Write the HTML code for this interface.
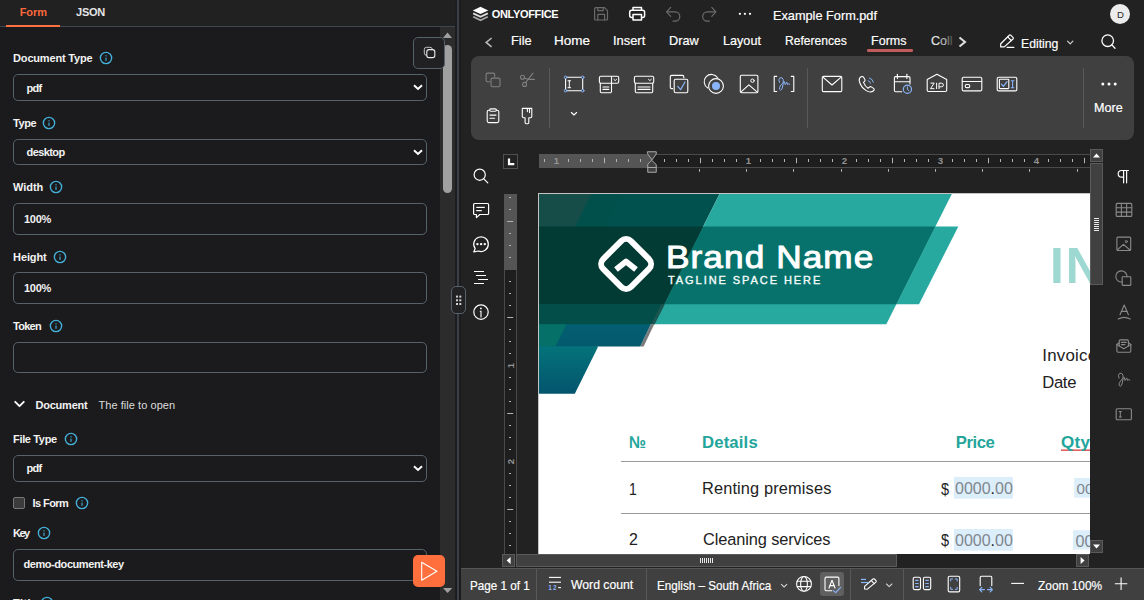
<!DOCTYPE html>
<html><head><meta charset="utf-8"><title>ONLYOFFICE Docs Playground</title>
<style>
html,body{margin:0;padding:0;}
body{width:1144px;height:600px;overflow:hidden;position:relative;background:#222222;font-family:"Liberation Sans",sans-serif;}
.a{position:absolute;box-sizing:border-box;}
.t{position:absolute;white-space:pre;line-height:20px;font-family:"Liberation Sans",sans-serif;}
.t i{font-style:normal;color:#222;}
svg{position:absolute;overflow:visible;}
.inp{position:absolute;box-sizing:border-box;left:13px;width:414px;border:1px solid #55616b;border-radius:5px;background:#1b1b1d;}
.info{position:absolute;width:14px;height:14px;}
.sep{position:absolute;width:1px;background:#595959;}
</style></head>
<body>
<!-- ================= LEFT PANEL ================= -->
<div class="a" id="left" style="left:0;top:0;width:457px;height:600px;background:#1b1b1d;"></div>
<div class="a" style="left:0;top:0;width:457px;height:27px;background:#212122;border-bottom:1px solid #3e4750;"></div>
<div class="a" style="left:6px;top:25px;width:54px;height:2px;background:#fd7040;"></div>
<!-- scrollbar -->
<div class="a" style="left:440px;top:27px;width:15px;height:573px;background:#2c2c2c;"></div>
<div class="a" style="left:443px;top:45px;width:9px;height:148px;background:#a0a0a0;border-radius:5px;"></div>
<svg style="left:440px;top:27px" width="15" height="573"><path d="M3 11 L7.5 5.5 L12 11 Z" fill="#a0a0a0"/><path d="M3 561 L12.2 561 L7.6 566 Z" fill="#a0a0a0"/></svg>
<!-- inputs -->
<div class="inp" style="top:74px;height:27px;"></div>
<div class="inp" style="top:139px;height:26px;"></div>
<div class="inp" style="top:203px;height:32px;"></div>
<div class="inp" style="top:272px;height:32px;"></div>
<div class="inp" style="top:342px;height:31px;"></div>
<div class="inp" style="top:455px;height:27px;"></div>
<div class="inp" style="top:549px;height:32px;"></div>
<!-- select chevrons -->
<svg style="left:413px;top:83.7px" width="10" height="8"><path d="M1 1.2 L5 5 L9 1.2" fill="none" stroke="#fff" stroke-width="1.9" stroke-linecap="butt" stroke-linejoin="miter"/></svg>
<svg style="left:413px;top:148.7px" width="10" height="8"><path d="M1 1.2 L5 5 L9 1.2" fill="none" stroke="#fff" stroke-width="1.9" stroke-linecap="butt" stroke-linejoin="miter"/></svg>
<svg style="left:413px;top:464.7px" width="10" height="8"><path d="M1 1.2 L5 5 L9 1.2" fill="none" stroke="#fff" stroke-width="1.9" stroke-linecap="butt" stroke-linejoin="miter"/></svg>
<!-- section chevron -->
<svg style="left:14px;top:400px" width="11" height="9"><path d="M1.2 1.8 L5.5 6.2 L9.8 1.8" fill="none" stroke="#fff" stroke-width="1.8" stroke-linecap="round" stroke-linejoin="round"/></svg>
<!-- checkbox -->
<div class="a" style="left:13px;top:497px;width:12px;height:12px;background:#3b3b3b;border:1px solid #767676;border-radius:2px;"></div>
<!-- info icons -->
<svg width="0" height="0" style="position:absolute"><defs>
<g id="info"><circle cx="7" cy="7" r="5.65" fill="none" stroke="#45b1da" stroke-width="1.35"/><rect x="6.45" y="6.6" width="1.1" height="3.3" fill="#45b1da"/><rect x="6.45" y="4.2" width="1.1" height="1.2" fill="#45b1da"/></g>
</defs></svg>
<svg class="info" style="left:98.5px;top:51.4px"><use href="#info"/></svg>
<svg class="info" style="left:42.4px;top:116.3px"><use href="#info"/></svg>
<svg class="info" style="left:49.3px;top:180.3px"><use href="#info"/></svg>
<svg class="info" style="left:53.0px;top:249.5px"><use href="#info"/></svg>
<svg class="info" style="left:48.5px;top:319.0px"><use href="#info"/></svg>
<svg class="info" style="left:63.5px;top:432.3px"><use href="#info"/></svg>
<svg class="info" style="left:75.4px;top:495.8px"><use href="#info"/></svg>
<svg class="info" style="left:37.0px;top:526.0px"><use href="#info"/></svg>
<svg class="info" style="left:39.8px;top:595.6px"><use href="#info"/></svg>
<!-- copy button -->
<div class="a" style="left:413px;top:37px;width:32px;height:32px;background:#212123;border:1px solid #55616b;border-radius:5px;"></div>
<svg style="left:423px;top:46px" width="13" height="13"><rect x="1.3" y="1.3" width="8" height="8" rx="2.2" fill="none" stroke="#c4c4c4" stroke-width="1"/><rect x="3.8" y="3.6" width="8" height="8" rx="2.2" fill="#212123" stroke="#ececec" stroke-width="1.1"/></svg>
<!-- run button -->
<div class="a" style="left:413px;top:555px;width:32px;height:32px;background:#ff6f3d;border-radius:5px;"></div>
<svg style="left:413px;top:555px" width="32" height="32"><path d="M8.7 7.2 L23.9 16.2 L8.7 25.2 Z" fill="none" stroke="#fff" stroke-width="1.1" stroke-linejoin="round"/></svg>
<!-- divider + handle -->
<div class="a" style="left:455px;top:0;width:2px;height:600px;background:#1d1d1f;"></div>
<div class="a" style="left:457px;top:0;width:2px;height:600px;background:#3a4047;"></div>
<div class="a" style="left:459px;top:0;width:2px;height:600px;background:#1c1c1d;"></div>
<!-- ================= RIGHT: DOCUMENT AREA ================= -->
<div class="a" style="left:538px;top:193px;width:570px;height:380px;background:#fff;border:1px solid #c4c4c4;"></div>
<svg style="left:0;top:0" width="1144" height="600" viewBox="0 0 1144 600">
<defs>
<linearGradient id="g4" x1="0" y1="0" x2="0" y2="1"><stop offset="0" stop-color="#04737a"/><stop offset="1" stop-color="#03556d"/></linearGradient>
<linearGradient id="g3" x1="0" y1="0" x2="0" y2="1"><stop offset="0" stop-color="#035f73"/><stop offset="1" stop-color="#03586c"/></linearGradient>
</defs>
<!-- seam underlays -->
<rect x="539" y="345" width="58" height="3" fill="#04727a"/>
<rect x="539" y="323" width="111" height="3" fill="#034e48"/>
<!-- base dark teal -->
<polygon points="539,194 719.5,194 654.2,324.2 539,324.2" fill="#01524e"/>
<!-- top-left lighter slate -->
<polygon points="539,194 591.5,194 575.3,226.5 539,226.5" fill="#164d48"/>
<polygon points="591.5,194 622,194 605.8,226.5 575.3,226.5" fill="#02504c"/>
<!-- light teal parallelogram -->
<polygon points="719.5,194 951.8,194 886.3,324.2 654.2,324.2" fill="#28a99f"/>
<!-- band extension -->
<polygon points="935.2,226.5 958.3,226.5 919.0,304.2 896.3,304.2" fill="#28a9a0"/>
<!-- medium band -->
<polygon points="703.2,226.5 935.2,226.5 896.3,304.2 664.3,304.2" fill="#06726b"/>
<!-- dark band -->
<polygon points="539,226.5 703.2,226.5 664.3,304.2 539,304.2" fill="#023a34"/>
<!-- row below band -->
<polygon points="539,304.2 664.3,304.2 654.2,324.2 539,324.2" fill="#034e48"/>
<polygon points="661.2,304.2 664.8,304.2 654.7,324.2 651.1,324.2" fill="#1c5650"/>
<!-- row 3 -->
<polygon points="650.8,324.2 654.2,324.2 643.6,346.4 640.2,346.4" fill="#7a7a7a"/>
<polygon points="539,324.2 650.8,324.2 640.2,346.4 539,346.4" fill="url(#g3)"/>
<polygon points="539,324.2 566.5,324.2 555.5,346.4 539,346.4" fill="#047068"/>
<!-- row 4 -->
<polygon points="539,346.4 598.2,346.4 574.8,393.7 539,393.7" fill="url(#g4)"/>
<!-- logo -->
<rect x="606.4" y="244.3" width="39.4" height="39.4" rx="7" fill="none" stroke="#fff" stroke-width="6" transform="rotate(45 626.1 264)"/>
<path d="M616 269.6 L626 261.4 L636 269.6" fill="none" stroke="#fff" stroke-width="5.8" stroke-linejoin="round"/>
<!-- table lines -->
<rect x="621" y="461" width="480" height="1" fill="#9a9a9a"/>
<rect x="621" y="513" width="480" height="1" fill="#9a9a9a"/>
<!-- fields -->
<rect x="953.9" y="476.9" width="59" height="21.8" fill="#ddeefb"/>
<rect x="953.9" y="529" width="59" height="21.7" fill="#ddeefb"/>
<rect x="1074.2" y="477.9" width="30" height="19.8" fill="#ddeefb"/>
<rect x="1073" y="530.2" width="30" height="19.4" fill="#ddeefb"/>
<!-- spell underline -->
<rect x="1061" y="449.5" width="40" height="1.3" fill="#e03a3a"/>
</svg>

<span class="t" style="left:665.90px;top:247.31px;font-size:32px;color:#fff;letter-spacing:0.977px;transform:scaleX(1.1);transform-origin:0 0;-webkit-text-stroke:0.95px #fff;">Brand Name</span>
<span class="t" style="left:668.10px;top:271.07px;font-size:10.2px;color:#f4fbfa;letter-spacing:1.789px;transform:scaleX(1.08);transform-origin:0 0;-webkit-text-stroke:0.35px #f4fbfa;">TAGLINE SPACE HERE</span>
<span class="t" style="left:1050.00px;top:256.01px;font-size:49.6px;color:#9dd8d2;font-weight:700;letter-spacing:2px;">IN</span>
<span class="t" style="left:1042.20px;top:346.14px;font-size:16.9px;color:#222;letter-spacing:0.25px;">Invoice</span>
<span class="t" style="left:1042.20px;top:373.21px;font-size:16.7px;color:#222;letter-spacing:-0.323px;">Date</span>
<span class="t" style="left:628.60px;top:433.11px;font-size:17px;color:#23a59b;font-weight:700;transform:scaleX(0.9);transform-origin:0 0;">№</span>
<span class="t" style="left:702.00px;top:433.21px;font-size:16.7px;color:#23a59b;font-weight:700;letter-spacing:0.160px;">Details</span>
<span class="t" style="left:955.70px;top:433.21px;font-size:16.7px;color:#23a59b;font-weight:700;letter-spacing:-0.410px;">Price</span>
<span class="t" style="left:1061.30px;top:433.21px;font-size:16.7px;color:#23a59b;font-weight:700;transform:scaleX(1.02);transform-origin:0 0;letter-spacing:0.3px;">Qty</span>
<span class="t" style="left:629.45px;top:479.28px;font-size:16.5px;color:#222;transform:scaleX(0.85);transform-origin:0 0;">1</span>
<span class="t" style="left:702.02px;top:479.21px;font-size:16.7px;color:#222;letter-spacing:0.140px;transform:scaleX(0.98);transform-origin:0 0;">Renting premises</span>
<span class="t" style="left:940.80px;top:478.98px;font-size:16.5px;color:#222;transform:scaleX(0.88);transform-origin:0 0;">$</span>
<span class="t" style="left:954.70px;top:478.48px;font-size:16.5px;color:#7f868e;transform:scaleX(0.97);transform-origin:0 0;">0000<i>.</i>00</span>
<span class="t" style="left:1076.50px;top:478.63px;font-size:15.2px;color:#7f868e;">00</span>
<span class="t" style="left:629.40px;top:528.88px;font-size:16.5px;color:#222;transform:scaleX(0.97);transform-origin:0 0;">2</span>
<span class="t" style="left:703.00px;top:529.51px;font-size:16.7px;color:#222;letter-spacing:-0.104px;transform:scaleX(0.98);transform-origin:0 0;">Cleaning services</span>
<span class="t" style="left:940.80px;top:529.88px;font-size:16.5px;color:#222;transform:scaleX(0.88);transform-origin:0 0;">$</span>
<span class="t" style="left:954.70px;top:530.08px;font-size:16.5px;color:#7f868e;transform:scaleX(0.97);transform-origin:0 0;">0000<i>.</i>00</span>
<span class="t" style="left:1075.40px;top:531.39px;font-size:16.2px;color:#7f868e;">00</span>
<!-- overlays clipping page -->
<div class="a" style="left:1090px;top:141px;width:54px;height:427px;background:#222222;"></div>
<div class="a" style="left:461px;top:554px;width:683px;height:14px;background:#222222;"></div>
<div class="a" style="left:461px;top:141px;width:77px;height:413px;background:#222222;"></div>
<!-- status bar -->
<div class="a" style="left:461px;top:568px;width:683px;height:32px;background:#404040;border-top:1px solid #565656;"></div>
<div class="sep" style="left:536px;top:569px;height:31px;background:#585858;"></div>
<div class="sep" style="left:646px;top:569px;height:31px;background:#585858;"></div>
<div class="sep" style="left:850px;top:569px;height:31px;background:#585858;"></div>
<div class="sep" style="left:903px;top:569px;height:31px;background:#585858;"></div>
<div class="a" style="left:820px;top:572px;width:24px;height:24px;background:#606060;border-radius:3px;"></div>
<!-- toolbar panel -->
<div class="a" style="left:471px;top:56px;width:663px;height:84px;background:#404040;border-radius:8px;"></div>
<div class="sep" style="left:549px;top:68px;height:60px;"></div>
<div class="sep" style="left:807px;top:68px;height:60px;"></div>
<div class="sep" style="left:1083px;top:68px;height:60px;"></div>
<!-- forms tab underline -->
<div class="a" style="left:867.4px;top:49.2px;width:45.2px;height:2.4px;background:#bf5d5d;border-radius:1.2px;"></div>
<!-- avatar -->
<div class="a" style="left:1110px;top:4px;width:20px;height:20px;border-radius:10px;background:#ececec;"></div>
<!-- horizontal ruler -->
<div class="a" style="left:539px;top:154px;width:551px;height:14px;background:#1e1e1e;border-top:1px solid #4a4a4a;border-bottom:1px solid #4a4a4a;"></div>
<div class="a" style="left:539px;top:154px;width:113px;height:14px;background:#555555;"></div>
<!-- ruler corner -->
<div class="a" style="left:503px;top:154px;width:15px;height:15px;background:#222;border:1px solid #505050;"></div>
<!-- vertical ruler -->
<div class="a" style="left:504px;top:194px;width:13px;height:360px;background:#1e1e1e;border-left:1px solid #4a4a4a;border-right:1px solid #4a4a4a;"></div>
<div class="a" style="left:504px;top:194px;width:13px;height:76px;background:#555555;"></div>
<!-- v scrollbar -->
<div class="a" style="left:1090px;top:149px;width:13px;height:13px;background:#404040;border:1px solid #5a5a5a;"></div>
<div class="a" style="left:1090px;top:163px;width:13px;height:122px;background:#404040;border:1px solid #5a5a5a;"></div>
<div class="a" style="left:1090px;top:540px;width:13px;height:13px;background:#404040;border:1px solid #5a5a5a;"></div>
<!-- h scrollbar -->
<div class="a" style="left:502px;top:554px;width:13px;height:13px;background:#404040;border:1px solid #5a5a5a;"></div>
<div class="a" style="left:516px;top:554px;width:381px;height:13px;background:#404040;border:1px solid #5a5a5a;"></div>
<div class="a" style="left:1076px;top:554px;width:13px;height:13px;background:#404040;border:1px solid #5a5a5a;"></div>
<svg style="left:0;top:0" width="1144" height="600" viewBox="0 0 1144 600" fill="none" stroke-linecap="round" stroke-linejoin="round">
<!-- ===== header icons ===== -->
<g>
<polygon points="472.8,10.4 480.5,6.8 488.2,10.4 480.5,13.9" fill="#fff"/>
<path d="M473.2 13.3 L480.5 16.75 L487.8 13.3" stroke="#dcdcdc" stroke-width="1.9" stroke-linecap="butt" stroke-linejoin="miter"/>
<path d="M473.2 16.8 L480.5 20.25 L487.8 16.8" stroke="#a6a6a6" stroke-width="1.8" stroke-linecap="butt" stroke-linejoin="miter"/>
</g>
<g stroke="#6b6b6b" stroke-width="1.2">
<path d="M596 7.6 H604.5 L607.5 10.6 V19 Q607.5 20 606.5 20 H595.6 Q594.6 20 594.6 19 V9 Q594.6 7.6 596 7.6 Z"/>
<path d="M597.8 7.8 V10.7 H603.2 V7.8"/>
<path d="M597.8 20 V14.4 H604.6 V20"/>
<!-- undo -->
<path d="M670.7 7.4 L666.6 11.9 L670.7 16.4"/>
<path d="M667 11.9 H675.2 A4.6 4.6 0 0 1 675.2 21.1 H673"/>
<!-- redo -->
<path d="M711.8 7.4 L715.9 11.9 L711.8 16.4"/>
<path d="M715.5 11.9 H707.3 A4.6 4.6 0 0 0 707.3 21.1 H709.5"/>
</g>
<g stroke="#fff" stroke-width="1.5">
<rect x="629.7" y="10.2" width="14.9" height="7.4" rx="2"/>
<path d="M633 10 V7.4 H641.5 V10"/>
<rect x="633" y="14.4" width="8.5" height="5.6" fill="#222"/>
</g>
<g fill="#fff"><circle cx="739.9" cy="13.8" r="1.15"/><circle cx="744.9" cy="13.8" r="1.15"/><circle cx="750" cy="13.8" r="1.15"/></g>
<!-- ===== tab row icons ===== -->
<path d="M491.6 38 L486.2 42.4 L491.6 46.8" stroke="#b8b8b8" stroke-width="1.6" stroke-linecap="butt" stroke-linejoin="miter"/>
<path d="M959.5 37.5 L965 42 L959.5 46.5" stroke="#e2e2e2" stroke-width="2" stroke-linecap="butt" stroke-linejoin="miter"/>
<!-- pencil -->
<g stroke="#fff" stroke-width="1.2">
<path d="M1000.7 46.9 V43.7 L1009.3 35.3 Q1010.1 34.6 1010.9 35.3 L1013 37.4 Q1013.7 38.2 1013 39 L1004.3 46.9 Z"/>
<path d="M1007.7 36.9 L1011.3 40.5"/>
<path d="M1007 47.3 H1013.9"/>
</g>
<path d="M1067.5 41.2 L1070.2 43.9 L1072.9 41.2" stroke="#d0d0d0" stroke-width="1.2"/>
<g stroke="#fff" stroke-width="1.3"><circle cx="1107.7" cy="40.7" r="5.8"/><path d="M1111.9 44.9 L1115 48.2"/></g>
<!-- ===== toolbar icons ===== -->
<g stroke="#7f7f7f" stroke-width="1.1">
<path d="M489.6 81.7 H487.6 Q486.1 81.7 486.1 80.2 V74.6 Q486.1 73.1 487.6 73.1 H493.2 Q494.7 73.1 494.7 74.6 V76.6"/>
<rect x="491" y="78.1" width="9" height="8.7" rx="1.5"/>
<circle cx="522.5" cy="77.3" r="2"/><circle cx="524.6" cy="84.4" r="2"/>
<path d="M533 73.1 L525.6 82.6"/><path d="M524.4 78 L528.6 79.4 H534.4"/>
</g>
<g stroke="#fff" stroke-width="1.1">
<!-- paste -->
<rect x="487.2" y="110.2" width="11.6" height="12.4" rx="1.6"/>
<rect x="489.6" y="108.9" width="6.8" height="2.4" rx="1.2" fill="#404040"/>
<path d="M490 115.1 H496"/><path d="M490 118.2 H494.5"/>
<!-- painter -->
<path d="M522.3 108.4 H531.8 V116.6 Q531.8 117.8 530.6 117.8 H528.8 V122.6 Q528.8 123.7 527.7 123.7 H526.2 Q525.1 123.7 525.1 122.6 V117.8 H523.5 Q522.3 117.8 522.3 116.6 Z"/>
<path d="M527.4 108.6 V111.6"/><path d="M529.5 108.6 V112.6"/>
<!-- text field -->
<rect x="565.6" y="77.3" width="17.1" height="13.4"/>
<path d="M568 80.8 H570.6 M569.3 80.8 V87.7 M568 87.7 H570.6" stroke-width="1"/>
<!-- combo -->
<rect x="599.4" y="76.3" width="19.3" height="7" rx="1.5"/>
<path d="M611.5 76.5 V83.3"/>
<path d="M600.3 83.3 V91.6 Q600.3 92.8 601.5 92.8 H610.3 Q611.5 92.8 611.5 91.6 V83.3"/>
<path d="M603 87 H608.8"/><path d="M603 89.4 H608.8"/>
<path d="M613.9 79.4 L615.2 80.6 L616.5 79.4" stroke-width="1"/>
<!-- dropdown -->
<rect x="634.4" y="76.3" width="19.3" height="7" rx="1.5"/>
<path d="M635.3 83.3 V91.6 Q635.3 92.8 636.5 92.8 H651.5 Q652.7 92.8 652.7 91.6 V83.3"/>
<path d="M638 87 H650"/><path d="M638 89.4 H650"/>
<path d="M648.5 79.3 L649.9 80.6 L651.3 79.3" stroke-width="1"/>
<!-- checkbox -->
<path d="M672.8 88.6 H671.6 Q670.3 88.6 670.3 87.3 V76.7 Q670.3 75.4 671.6 75.4 H682.5 Q683.8 75.4 683.8 76.7 V77.8"/>
<rect x="674.2" y="79.2" width="13.6" height="13.6" rx="1.5"/>
<!-- radio -->
<path d="M707.8 88 A7.3 7.3 0 1 1 717.6 77.7"/>
<circle cx="716" cy="86" r="7.4"/>
<!-- image -->
<rect x="740.3" y="75.3" width="17.6" height="17.5" rx="1.2"/>
<path d="M741.3 91.6 L748.9 84.8 L757 91.8"/>
<circle cx="752.5" cy="80.7" r="1.7" stroke-width="1"/>
<!-- signature brackets -->
<path d="M776.7 76.4 H774.2 V91.5 H776.7"/><path d="M791.3 76.4 H793.8 V91.5 H791.3"/>
<!-- email -->
<rect x="822.3" y="76.4" width="19.5" height="15.2" rx="1.2"/>
<path d="M823.2 77.4 L832 85 L840.9 77.4"/>
<!-- phone -->
<path d="M861.6 76.6 Q859 77.6 859.2 80.6 Q860.4 86.8 866.2 90.6 Q870.4 93.2 873.6 90.8 Q874.8 89.6 873.9 88.6 L871.4 86.9 Q870.3 86.3 869.3 87.2 L868 88.2 Q865.1 86.4 863.5 82.4 L864.6 81.3 Q865.4 80.4 864.8 79.2 L863.4 77 Q862.6 76.2 861.6 76.6 Z"/>
<!-- calendar -->
<path d="M901.8 91.7 H895.6 Q894.4 91.7 894.4 90.5 V77.8 Q894.4 76.6 895.6 76.6 H908.8 Q910 76.6 910 77.8 V84"/>
<path d="M894.6 81.7 H909.8"/><path d="M897.4 74.3 V78.4"/><path d="M906.9 74.3 V78.4"/>
<!-- zip -->
<path d="M927.2 79.6 L936.9 74.3 L946.7 79.6 V90.3 Q946.7 91.5 945.5 91.5 H928.4 Q927.2 91.5 927.2 90.3 Z"/>
<!-- card -->
<rect x="962.2" y="77.2" width="19.6" height="13.7" rx="1.5"/>
<path d="M962.4 81.5 H981.6"/>
<rect x="965.3" y="84.5" width="4.4" height="3.1" rx="1.2"/>
<!-- complex -->
<rect x="997.2" y="77.2" width="19.6" height="13.7" rx="1.5"/>
<rect x="999.4" y="79.2" width="9.4" height="9.4" rx="0.6"/>
<!-- chevron -->
<path d="M571.4 112.5 L574 115 L576.6 112.5"/>
</g>
<path d="M930.5 83.1 H934.2 L930.5 88.7 H934.4 M936.6 82.8 V89 M939 89 V83.2 H941.3 Q943.4 83.2 943.4 85 Q943.4 86.8 941.3 86.8 H939" stroke="#fff" stroke-width="1" stroke-linecap="butt" stroke-linejoin="miter"/>
<g stroke="#8ab4f8" stroke-width="1.2">
<g fill="#404040" stroke-width="1"><circle cx="565.6" cy="77.3" r="1.3"/><circle cx="582.7" cy="77.3" r="1.3"/><circle cx="565.6" cy="90.7" r="1.3"/><circle cx="582.7" cy="90.7" r="1.3"/></g>
<path d="M677.7 86.4 L680.6 89.6 L685 82"/>
<circle cx="716" cy="86" r="4" fill="#8ab4f8" stroke="none"/>
<!-- signature script -->
<path d="M779.4 82.4 Q778 79 780 77.8 Q782.6 77 783.2 79.6 Q783.6 83 782.6 87 Q781.8 90.2 780.6 90.2 Q779 89.6 779.6 87.4 Q780.6 84.4 784.4 81.6 L785.2 84.6 L786.8 82.2 L787.6 84.6 Q788.6 83 789.8 84.2" stroke-width="1"/>
<!-- phone waves -->
<path d="M868.2 80.8 Q870 81.2 870.6 83.2" stroke-width="1"/>
<path d="M869.4 78 Q872.6 78.8 873.4 82.2" stroke-width="1"/>
<!-- clock -->
<circle cx="907.4" cy="89.3" r="4.1" fill="#404040"/>
<path d="M907.4 86.9 V89.5 L908.9 90.6" stroke-width="1"/>
<!-- complex check + I -->
<path d="M1001.4 84.2 L1003.4 86.4 L1007 81.6"/>
<path d="M1011.2 80.7 H1014 M1012.6 80.7 V87.7 M1011.2 87.7 H1014" stroke-width="1.1"/>
</g>
<g fill="#fff"><circle cx="1102.8" cy="84" r="1.5"/><circle cx="1109" cy="84" r="1.5"/><circle cx="1115.2" cy="84" r="1.5"/></g>

<!-- ===== left sidebar ===== -->
<g stroke="#fff" stroke-width="1.2">
<circle cx="479.7" cy="174.7" r="5.6"/><path d="M483.8 178.8 L487.8 182.8"/>
<path d="M474.6 203.5 H487.6 Q488.6 203.5 488.6 204.5 V213.5 Q488.6 214.5 487.6 214.5 H479.8 L476.4 217.6 V214.5 H474.6 Q473.6 214.5 473.6 213.5 V204.5 Q473.6 203.5 474.6 203.5 Z"/>
<path d="M476.2 207.4 H484.8" stroke-linecap="butt"/><path d="M476.2 210.6 H481.8" stroke-linecap="butt"/>
<path d="M475.2 248.6 A7.3 7.3 0 1 1 478.4 251 L473.8 251.8 Z"/>
<path d="M474 271.5 H484 M476 275.5 H486 M478 279.5 H488 M474 283.5 H484" stroke-width="1.1" stroke-linecap="butt"/>
<circle cx="481" cy="312.1" r="7.2"/><path d="M479.8 311.2 H481 V317.4" stroke-width="1.1" stroke-linecap="butt" stroke-linejoin="miter"/>
</g>
<g fill="#fff"><circle cx="477.4" cy="244.1" r="1.2"/><circle cx="481.1" cy="244.1" r="1.2"/><circle cx="484.8" cy="244.1" r="1.2"/><circle cx="480.9" cy="308.4" r="0.9"/></g>
<!-- ===== right sidebar ===== -->
<g stroke="#fff" stroke-width="1.2">
<path d="M1128.4 170.5 H1121.6 Q1118.2 170.5 1118.2 173.8 Q1118.2 177.2 1121.6 177.2 H1123.6"/>
<path d="M1123.6 170.5 V182.8"/><path d="M1126.6 170.5 V182.8"/>
</g>
<g stroke="#8a8a8a" stroke-width="1.1">
<rect x="1116.2" y="203.4" width="15.6" height="13" rx="1"/>
<path d="M1116.4 207.8 H1131.6"/><path d="M1116.4 212.1 H1131.6"/><path d="M1121.4 203.6 V216.2"/><path d="M1126.6 203.6 V216.2"/>
<rect x="1116.9" y="237.1" width="13.8" height="13.4" rx="1"/>
<path d="M1117.6 249.6 L1123.4 244.4 L1130 250"/><circle cx="1126.3" cy="241.6" r="1.1" stroke-width="1"/>
<path d="M1122.2 282 A5.6 5.6 0 1 1 1127 276.6"/>
<rect x="1122.2" y="276.8" width="8.6" height="8.6" rx="0.6"/>
<path d="M1120 314.8 L1124.2 305 L1128.4 314.8"/><path d="M1121.4 311.4 H1127"/>
<path d="M1118.2 319 Q1124.2 315.8 1130.2 319"/>
<path d="M1116.9 344.4 V351 Q1116.9 352.2 1118.1 352.2 H1129.6 Q1130.8 352.2 1130.8 351 V344.4"/>
<path d="M1116.9 344.6 L1123.8 348.8 L1130.8 344.6"/>
<path d="M1116.9 344.4 L1119.2 342.8 M1130.8 344.4 L1128.4 342.8"/>
<path d="M1119.2 346 V340.9 Q1119.2 339.9 1120.2 339.9 H1127.4 Q1128.4 339.9 1128.4 340.9 V346"/>
<path d="M1121.4 342.4 H1126.2"/><path d="M1121.4 344.6 H1125"/>
<path d="M779.4 82.4 Q778 79 780 77.8 Q782.6 77 783.2 79.6 Q783.6 83 782.6 87 Q781.8 90.2 780.6 90.2 Q779 89.6 779.6 87.4 Q780.6 84.4 784.4 81.6 L785.2 84.6 L786.8 82.2 L787.6 84.6 Q788.6 83 789.8 84.2" stroke-width="0.95" transform="translate(300.60 291.62) scale(1.05)"/>
<rect x="1116.2" y="408.7" width="15.2" height="11" rx="1"/>
<path d="M1119.2 411.6 H1121.4 M1120.3 411.6 V417 M1119.2 417 H1121.4" stroke-width="1"/>
</g>
<!-- ===== rulers ===== -->
<path d="M544.5 159.0 V162.0M568.5 159.0 V162.0M580.5 159.0 V162.0M592.5 159.0 V162.0M604.5 157.8 V163.2M616.5 159.0 V162.0M628.5 159.0 V162.0M640.5 159.0 V162.0M664.5 159.0 V162.0M676.5 159.0 V162.0M688.5 159.0 V162.0M700.5 157.8 V163.2M712.5 159.0 V162.0M724.5 159.0 V162.0M736.5 159.0 V162.0M760.5 159.0 V162.0M772.5 159.0 V162.0M784.5 159.0 V162.0M796.5 157.8 V163.2M808.5 159.0 V162.0M820.5 159.0 V162.0M832.5 159.0 V162.0M856.5 159.0 V162.0M868.5 159.0 V162.0M880.5 159.0 V162.0M892.5 157.8 V163.2M904.5 159.0 V162.0M916.5 159.0 V162.0M928.5 159.0 V162.0M952.5 159.0 V162.0M964.5 159.0 V162.0M976.5 159.0 V162.0M988.5 157.8 V163.2M1000.5 159.0 V162.0M1012.5 159.0 V162.0M1024.5 159.0 V162.0M1048.5 159.0 V162.0M1060.5 159.0 V162.0M1072.5 159.0 V162.0M1084.5 157.8 V163.2" stroke="#b4b4b4" stroke-width="1" stroke-linecap="butt"/>
<text x="556.5" y="164.3" font-family="Liberation Sans, sans-serif" font-size="9.6" font-weight="700" fill="#949494" stroke="none" text-anchor="middle">1</text>
<text x="748.5" y="164.3" font-family="Liberation Sans, sans-serif" font-size="9.6" font-weight="700" fill="#949494" stroke="none" text-anchor="middle">1</text>
<text x="844.5" y="164.3" font-family="Liberation Sans, sans-serif" font-size="9.6" font-weight="700" fill="#949494" stroke="none" text-anchor="middle">2</text>
<text x="940.5" y="164.3" font-family="Liberation Sans, sans-serif" font-size="9.6" font-weight="700" fill="#949494" stroke="none" text-anchor="middle">3</text>
<text x="1036.5" y="164.3" font-family="Liberation Sans, sans-serif" font-size="9.6" font-weight="700" fill="#949494" stroke="none" text-anchor="middle">4</text>
<path d="M699.5 169 V171.8M746.5 169 V171.8M793.5 169 V171.8M841.5 169 V171.8M888.5 169 V171.8M935.5 169 V171.8M982.5 169 V171.8M1029.5 169 V171.8M1077.5 169 V171.8" stroke="#b0b0b0" stroke-width="1" stroke-linecap="butt"/>
<g stroke="#a8a8a8" stroke-width="1" fill="#404040" stroke-linejoin="miter">
<path d="M647.75 151.75 H656.25 V154 L652 159.9 L647.75 154 Z"/>
<path d="M652 160.5 L656.25 164.6 V172.25 H647.75 V164.6 Z"/><path d="M647.75 167.5 H656.25"/>
</g>
<path d="M509 158.6 V164.1 H514.3" stroke="#fff" stroke-width="2.2" stroke-linecap="butt" stroke-linejoin="miter"/>
<path d="M509.0 197.5 H511.0M509.0 209.5 H511.0M507.2 221.5 H513.2M509.0 233.5 H511.0M509.0 245.5 H511.0M509.0 257.5 H511.0M509.0 281.5 H511.0M509.0 293.5 H511.0M509.0 305.5 H511.0M507.2 317.5 H513.2M509.0 329.5 H511.0M509.0 341.5 H511.0M509.0 353.5 H511.0M509.0 377.5 H511.0M509.0 389.5 H511.0M509.0 401.5 H511.0M507.2 413.5 H513.2M509.0 425.5 H511.0M509.0 437.5 H511.0M509.0 449.5 H511.0M509.0 473.5 H511.0M509.0 485.5 H511.0M509.0 497.5 H511.0M507.2 509.5 H513.2M509.0 521.5 H511.0M509.0 533.5 H511.0M509.0 545.5 H511.0" stroke="#b4b4b4" stroke-width="1" stroke-linecap="butt"/>
<text x="0" y="0" transform="translate(513.5 365.5) rotate(-90)" font-family="Liberation Sans, sans-serif" font-size="9.6" font-weight="700" fill="#949494" stroke="none" text-anchor="middle">1</text>
<text x="0" y="0" transform="translate(513.5 461.5) rotate(-90)" font-family="Liberation Sans, sans-serif" font-size="9.6" font-weight="700" fill="#949494" stroke="none" text-anchor="middle">2</text>
<!-- ===== scrollbars ===== -->
<g fill="#fff" stroke="none">
<path d="M1093 157.6 L1096.5 153.6 L1100 157.6 Z"/>
<path d="M1093 544.6 L1100 544.6 L1096.5 548.6 Z"/>
<path d="M510.6 557 L506.6 560.5 L510.6 564 Z"/>
<path d="M1080.6 557 L1084.6 560.5 L1080.6 564 Z"/>
</g>
<path d="M1094 218.5 H1099M1094 220.5 H1099M1094 222.5 H1099M1094 224.5 H1099M1094 226.5 H1099M1094 228.5 H1099M1094 230.5 H1099M700.5 558 V563M702.5 558 V563M704.5 558 V563M706.5 558 V563M708.5 558 V563M710.5 558 V563M712.5 558 V563" stroke="#e8e8e8" stroke-width="1" stroke-linecap="butt"/>

<!-- ===== status bar icons ===== -->
<g stroke="#fff" stroke-width="1.1">
<path d="M549 577.4 H561" stroke-linecap="butt"/><path d="M549 582.2 H561" stroke-linecap="butt"/><path d="M558.2 587.6 H561" stroke-linecap="butt"/>
<path d="M781.4 584.4 L784.1 587 L786.8 584.4" stroke="#d0d0d0"/>
<circle cx="804" cy="583.9" r="7.4"/><ellipse cx="804" cy="583.9" rx="3.4" ry="7.4"/>
<path d="M797.2 581.2 H810.8"/><path d="M797.2 586.6 H810.8"/>
<path d="M831.6 590.7 H826.2 Q825 590.7 825 589.5 V578.3 Q825 577.1 826.2 577.1 H837.7 Q838.9 577.1 838.9 578.3 V585.6"/>
<path d="M829 588 L832 580.2 L835 588"/><path d="M830 585.6 H834"/>
<path d="M864.6 589 V586.4 L873 579 Q873.8 578.4 874.5 579 L876 580.6 Q876.6 581.4 875.9 582.2 L867.4 589.2 Z"/>
<path d="M871.4 580.6 L874.2 583.6"/>
<path d="M886.5 584 L889.2 586.7 L891.9 584" stroke="#d0d0d0"/>
<rect x="913.2" y="577.3" width="7.3" height="12.3" rx="1.5"/><rect x="923.4" y="577.3" width="7.3" height="12.3" rx="1.5"/>
<rect x="948.2" y="576.3" width="11.5" height="15.6" rx="1.5"/>
<path d="M980.2 585.6 V577.5 Q980.2 576.3 981.4 576.3 H990.6 Q991.8 576.3 991.8 577.5 V585.6"/>
<path d="M1011.2 583.4 H1024" stroke-linecap="butt"/>
<path d="M1114.9 583.8 H1127.3 M1121.1 577.6 V590" stroke-linecap="butt"/>
</g>
<text x="548.2" y="589.9" font-family="Liberation Sans, sans-serif" font-size="6.4" font-weight="700" fill="#8ab4f8" stroke="none" textLength="8.4" lengthAdjust="spacing">12</text>
<g stroke="#8ab4f8" stroke-width="1.2">
<path d="M833.2 590.6 L835.7 592.6 L840.6 587.4"/>
<path d="M861 579.4 H866" stroke-linecap="butt"/><path d="M861 582.5 H868.6" stroke-linecap="butt"/>
<path d="M915.2 580.4 H918.6 M915.2 583.5 H918.6 M915.2 586.6 H918.6 M925.4 580.4 H928.8 M925.4 583.5 H928.8 M925.4 586.6 H928.8" stroke-linecap="butt" stroke-width="1.1"/>
<path d="M950.7 581.3 V578.9 H953 M954.9 578.9 H957.2 V581.3 M957.2 586.9 V589.3 H954.9 M953 589.3 H950.7 V586.9" stroke-width="1" stroke-linecap="butt" stroke-linejoin="miter"/>
<path d="M979.6 589.6 H984.4 M981.8 587.4 L979.6 589.6 L981.8 591.8"/>
<path d="M987.6 589.6 H992.4 M990.2 587.4 L992.4 589.6 L990.2 591.8"/>
</g>

</svg>


<div class="a" style="left:451px;top:286px;width:15px;height:28px;background:#222224;border:1px solid #55616b;border-radius:5px;"></div>
<svg style="left:451px;top:286px" width="15" height="28"><g fill="#d0d0d0"><rect x="5" y="9.6" width="2" height="2"/><rect x="8.3" y="9.6" width="2" height="2"/><rect x="5" y="13.3" width="2" height="2"/><rect x="8.3" y="13.3" width="2" height="2"/><rect x="5" y="17" width="2" height="2"/><rect x="8.3" y="17" width="2" height="2"/></g></svg>

<span class="t" style="left:19.70px;top:2.29px;font-size:11px;color:#f8683c;font-weight:700;letter-spacing:-0.073px;">Form</span>
<span class="t" style="left:76.00px;top:2.29px;font-size:11px;color:#e6e6e6;font-weight:700;letter-spacing:-0.237px;">JSON</span>
<span class="t" style="left:13.10px;top:48.49px;font-size:11px;color:#f2f2f2;font-weight:700;letter-spacing:-0.181px;">Document Type</span>
<span class="t" style="left:26.50px;top:78.09px;font-size:11px;color:#f2f2f2;font-weight:700;letter-spacing:-0.669px;">pdf</span>
<span class="t" style="left:13.10px;top:113.19px;font-size:11px;color:#f2f2f2;font-weight:700;letter-spacing:-0.447px;">Type</span>
<span class="t" style="left:26.50px;top:142.19px;font-size:11px;color:#f2f2f2;font-weight:700;letter-spacing:-0.576px;">desktop</span>
<span class="t" style="left:13.10px;top:177.19px;font-size:11px;color:#f2f2f2;font-weight:700;letter-spacing:-0.081px;">Width</span>
<span class="t" style="left:24.00px;top:209.19px;font-size:11px;color:#f2f2f2;font-weight:700;letter-spacing:-0.284px;">100%</span>
<span class="t" style="left:13.10px;top:246.69px;font-size:11px;color:#f2f2f2;font-weight:700;letter-spacing:-0.131px;">Height</span>
<span class="t" style="left:24.00px;top:278.19px;font-size:11px;color:#f2f2f2;font-weight:700;letter-spacing:-0.284px;">100%</span>
<span class="t" style="left:13.10px;top:316.19px;font-size:11px;color:#f2f2f2;font-weight:700;letter-spacing:-0.739px;">Token</span>
<span class="t" style="left:35.50px;top:395.19px;font-size:11px;color:#f2f2f2;font-weight:700;letter-spacing:-0.231px;">Document</span>
<span class="t" style="left:98.50px;top:395.19px;font-size:11px;color:#dcdcdc;letter-spacing:0.053px;">The file to open</span>
<span class="t" style="left:13.10px;top:429.19px;font-size:11px;color:#f2f2f2;font-weight:700;letter-spacing:-0.356px;">File Type</span>
<span class="t" style="left:26.50px;top:457.99px;font-size:11px;color:#f2f2f2;font-weight:700;letter-spacing:-0.669px;">pdf</span>
<span class="t" style="left:32.50px;top:493.19px;font-size:11px;color:#f2f2f2;font-weight:700;letter-spacing:-0.575px;">Is Form</span>
<span class="t" style="left:13.10px;top:523.19px;font-size:11px;color:#f2f2f2;font-weight:700;letter-spacing:-1.581px;">Key</span>
<span class="t" style="left:23.50px;top:554.19px;font-size:11px;color:#f2f2f2;font-weight:700;letter-spacing:-0.435px;">demo-document-key</span>
<span class="t" style="left:13.10px;top:592.59px;font-size:11px;color:#f2f2f2;font-weight:700;letter-spacing:0.401px;">Title</span>
<span class="t" style="left:491.80px;top:3.99px;font-size:11px;color:#fff;font-weight:700;letter-spacing:-0.338px;">ONLYOFFICE</span>
<span class="t" style="left:773.47px;top:6.10px;font-size:12.4px;color:#fff;transform:scaleX(1.02697);transform-origin:0 0;-webkit-text-stroke:0.2px;">Example Form.pdf</span>
<span class="t" style="left:1117.30px;top:5.20px;font-size:9.8px;color:#262626;transform:scaleX(0.98);transform-origin:0 0;">D</span>
<span class="t" style="left:510.66px;top:31.19px;font-size:13.6px;color:#fff;transform:scaleX(0.943777);transform-origin:0 0;-webkit-text-stroke:0.2px;">File</span>
<span class="t" style="left:553.91px;top:31.19px;font-size:13.6px;color:#fff;transform:scaleX(0.994211);transform-origin:0 0;-webkit-text-stroke:0.2px;">Home</span>
<span class="t" style="left:612.55px;top:31.19px;font-size:13.6px;color:#fff;transform:scaleX(0.948199);transform-origin:0 0;-webkit-text-stroke:0.2px;">Insert</span>
<span class="t" style="left:668.66px;top:31.19px;font-size:13.6px;color:#fff;transform:scaleX(0.935154);transform-origin:0 0;-webkit-text-stroke:0.2px;">Draw</span>
<span class="t" style="left:722.87px;top:31.19px;font-size:13.6px;color:#fff;transform:scaleX(0.929125);transform-origin:0 0;-webkit-text-stroke:0.2px;">Layout</span>
<span class="t" style="left:785.01px;top:31.19px;font-size:13.6px;color:#fff;transform:scaleX(0.889136);transform-origin:0 0;-webkit-text-stroke:0.2px;">References</span>
<span class="t" style="left:870.98px;top:31.19px;font-size:13.6px;color:#fff;transform:scaleX(0.922726);transform-origin:0 0;-webkit-text-stroke:0.2px;">Forms</span>
<span class="t" style="left:930.80px;top:31.19px;font-size:13.6px;color:#9a9a9a;transform:scaleX(0.923185);transform-origin:0 0;-webkit-text-stroke:0.2px;"><span style="color:#e4e4e4">C</span><span style="color:#b4b4b4">o</span><span style="color:#7a7a7a">l</span><span style="color:#5c5c5c">l</span></span>
<span class="t" style="left:1021.00px;top:33.79px;font-size:13.6px;color:#fff;transform:scaleX(0.899904);transform-origin:0 0;-webkit-text-stroke:0.2px;">Editing</span>
<span class="t" style="left:1094.18px;top:98.20px;font-size:12.4px;color:#fff;transform:scaleX(1.01687);transform-origin:0 0;-webkit-text-stroke:0.2px;">More</span>
<span class="t" style="left:470.44px;top:575.69px;font-size:13.6px;color:#fff;transform:scaleX(0.86061);transform-origin:0 0;-webkit-text-stroke:0.2px;">Page 1 of 1</span>
<span class="t" style="left:571.40px;top:574.69px;font-size:13.6px;color:#fff;transform:scaleX(0.89802);transform-origin:0 0;-webkit-text-stroke:0.2px;">Word count</span>
<span class="t" style="left:656.74px;top:575.69px;font-size:13.6px;color:#fff;transform:scaleX(0.858943);transform-origin:0 0;-webkit-text-stroke:0.2px;">English – South Africa</span>
<span class="t" style="left:1037.50px;top:575.69px;font-size:13.6px;color:#fff;transform:scaleX(0.875622);transform-origin:0 0;-webkit-text-stroke:0.2px;">Zoom 100%</span>
</body></html>
